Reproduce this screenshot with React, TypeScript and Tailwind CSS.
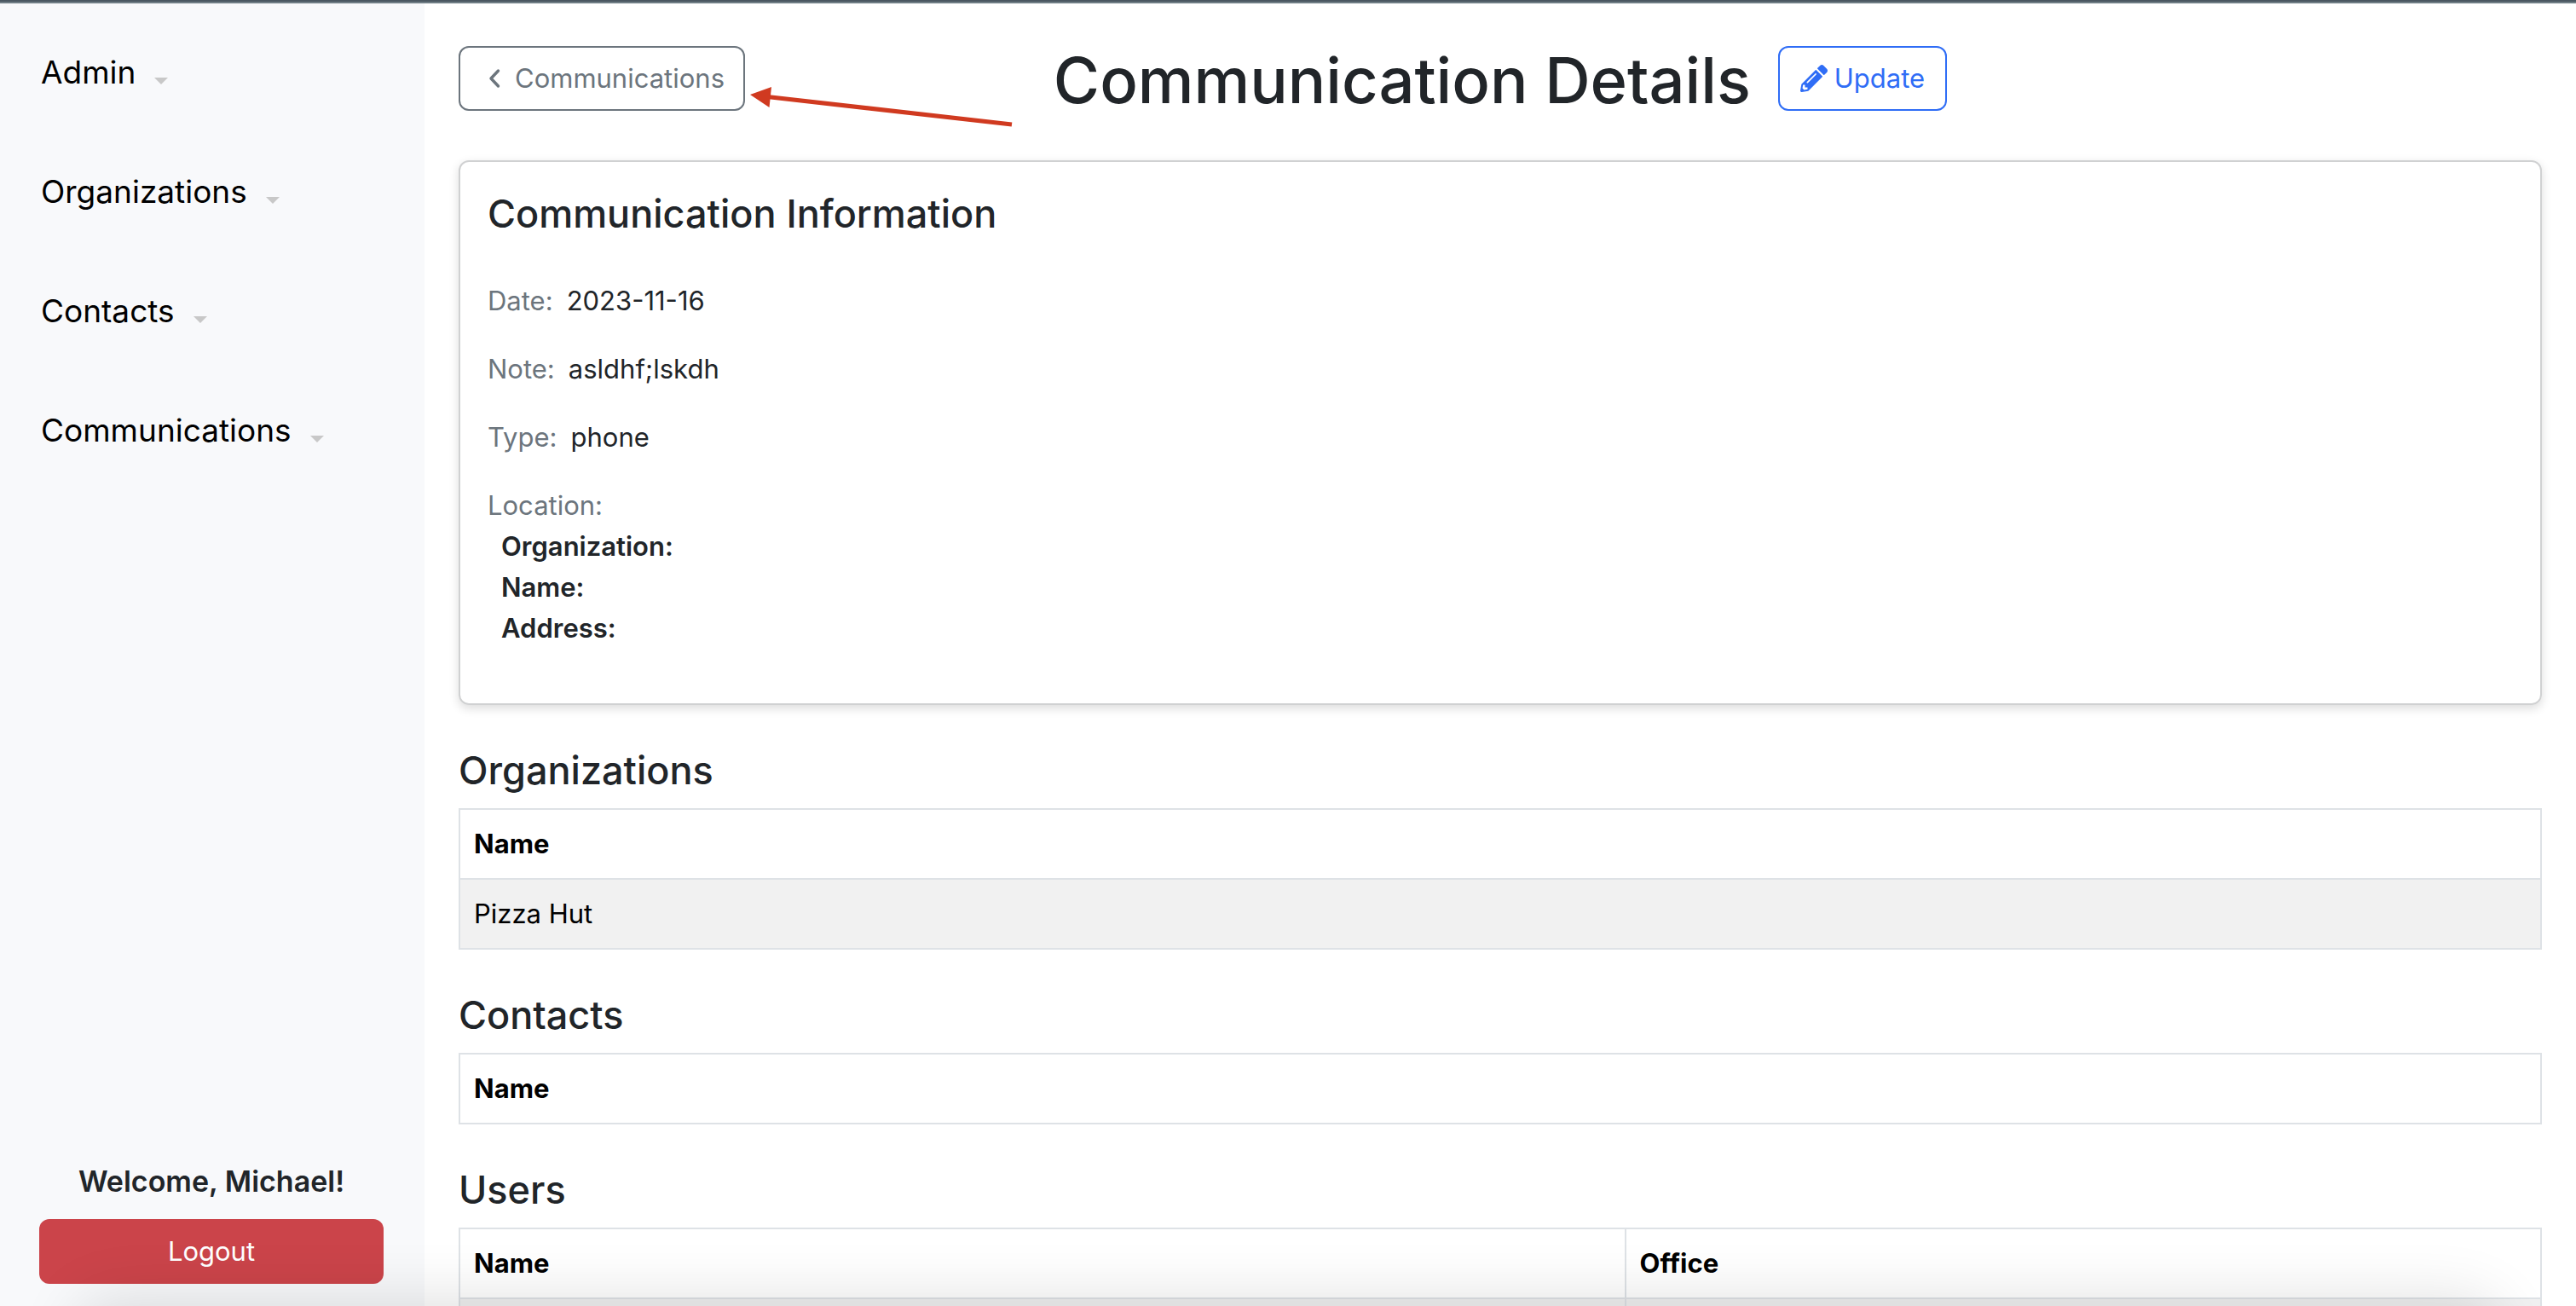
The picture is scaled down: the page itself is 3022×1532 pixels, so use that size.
import { FaPencilAlt } from "react-icons/fa";

const navItems = ["Admin", "Organizations", "Contacts", "Communications"];

function Sidebar() {
  return (
    <aside className="flex w-[498px] shrink-0 flex-col bg-[#f8f9fb] pt-[45px] pr-12 pb-[26px] pl-[46px]">
      <nav aria-label="Main" className="flex flex-col items-start gap-[68px] pl-0.5">
        {navItems.map((item) => (
          <button key={item} type="button" className="flex items-center gap-[22px] text-[37px] leading-[72px] text-black">
            {item}
            <svg aria-hidden="true" viewBox="0 0 16 8" className="mt-5 h-2 w-4 fill-[#c8c8c8]">
              <path d="M0 0h16L8 8z" />
            </svg>
          </button>
        ))}
      </nav>
      <div className="mt-auto flex flex-col gap-4 text-center">
        <p className="text-[34px] leading-[56px] font-semibold">Welcome, Michael!</p>
        <button type="button" className="rounded-xl bg-[#cb444a] py-3.5 text-[31px] leading-12 text-white">
          Logout
        </button>
      </div>
    </aside>
  );
}

function PageHeader() {
  return (
    <header className="grid grid-cols-[1fr_auto_1fr] items-start">
      <div className="relative justify-self-start pt-2">
        <button type="button" className="flex items-center gap-2 rounded-xl border-2 border-[#6c757d] py-3 pr-[22px] pl-6 text-[31px] leading-12 text-[#6c757d]">
          <svg aria-hidden="true" viewBox="0 0 32 32" className="size-8 fill-none stroke-current stroke-[3.4]" strokeLinecap="round" strokeLinejoin="round">
            <path d="M20.5 7 12 16l8.5 9" />
          </svg>
          Communications
        </button>
        <svg aria-hidden="true" viewBox="0 0 310 52" className="absolute top-14 left-full ml-1 h-[52px] w-[310px]">
          <path d="M22 11.5 309 44" stroke="#d03a20" strokeWidth="5" fill="none" />
          <path d="M2 9 27 0l-2.5 24z" fill="#d03a20" />
        </svg>
      </div>
      <div className="col-start-2 flex items-start gap-8">
        <h1 className="text-[74px] leading-24 font-medium">Communication Details</h1>
        <button type="button" className="mt-2 flex items-center gap-2 rounded-xl border-2 border-[#2f6df6] px-6 py-3 text-[31px] leading-12 text-[#2f6df6]">
          <FaPencilAlt aria-hidden="true" className="size-8" />
          Update
        </button>
      </div>
    </header>
  );
}

function Field({ label, value }: { label: string; value: string }) {
  return (
    <div className="flex gap-4">
      <dt className="text-[#6c757d]">{label}</dt>
      <dd>{value}</dd>
    </div>
  );
}

function InfoCard() {
  return (
    <section className="mt-[46px] rounded-xl border-2 border-[#d0d1d2] px-8 pt-8 pb-16 text-[31px] leading-12 shadow-[0_4px_12px_rgba(0,0,0,0.14)]">
      <h2 className="mb-[49px] text-[45px] leading-[58px] font-medium">Communication Information</h2>
      <dl className="flex flex-col gap-8">
        <Field label="Date:" value="2023-11-16" />
        <Field label="Note:" value="asldhf;lskdh" />
        <Field label="Type:" value="phone" />
        <div>
          <dt className="text-[#6c757d]">Location:</dt>
          <dd className="pl-4 font-semibold">
            <p>Organization:</p>
            <p>Name:</p>
            <p>Address:</p>
          </dd>
        </div>
      </dl>
    </section>
  );
}

function TableSection({ title, columns, rows }: { title: string; columns: string[]; rows: string[][] }) {
  return (
    <section className="mt-12">
      <h2 className="mb-4 text-[45px] leading-[57px] font-medium">{title}</h2>
      <table className="w-full border-collapse text-left text-[31px] leading-12 text-black">
        <thead>
          <tr>
            {columns.map((column) => (
              <th key={column} scope="col" className="border-2 border-[#dee2e6] p-4 font-bold not-only:first:w-14/25">
                {column}
              </th>
            ))}
          </tr>
        </thead>
        <tbody>
          {rows.map((row, r) => (
            <tr key={r} className="bg-[#f1f1f1]">
              {row.map((cell, c) => (
                <td key={c} className="h-[82px] border-2 border-[#dee2e6] p-4">
                  {cell}
                </td>
              ))}
            </tr>
          ))}
        </tbody>
      </table>
    </section>
  );
}

export default function App() {
  return (
    <div className="relative flex h-screen flex-col overflow-hidden bg-white font-['Inter',sans-serif] text-[#212529]">
      <div className="h-1 shrink-0 border-b-2 border-[#6f7d85] bg-[#4a5761]" />
      <div className="flex min-h-0 flex-1">
        <Sidebar />
        <main className="min-w-0 flex-1 overflow-hidden px-10 pt-[42px]">
          <PageHeader />
          <InfoCard />
          <TableSection title="Organizations" columns={["Name"]} rows={[["Pizza Hut"]]} />
          <TableSection title="Contacts" columns={["Name"]} rows={[]} />
          <TableSection title="Users" columns={["Name", "Office"]} rows={[["", ""]]} />
        </main>
      </div>
      <div aria-hidden="true" className="pointer-events-none absolute inset-x-24 top-full h-20 rounded-[40px] shadow-[0_0_70px_10px_rgba(0,0,0,0.12)]" />
    </div>
  );
}
